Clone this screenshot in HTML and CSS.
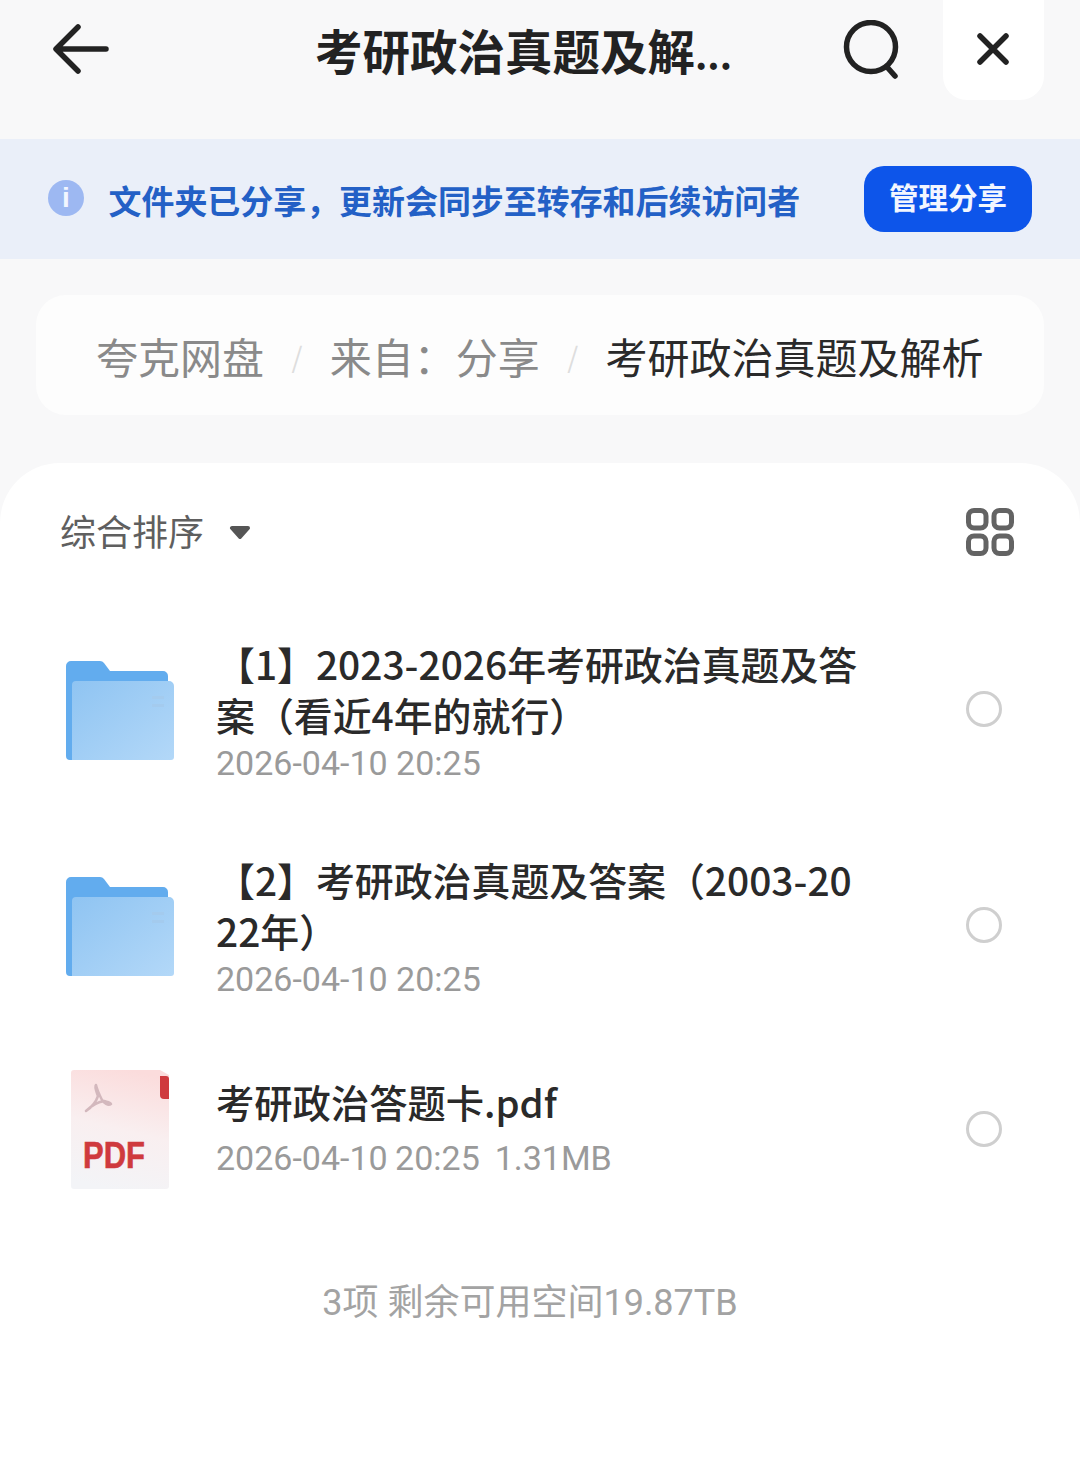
FILE: index.html
```html
<!DOCTYPE html>
<html lang="zh-CN">
<head>
<meta charset="utf-8">
<title>考研政治真题及解析</title>
<link rel="stylesheet" href="styles.css">
</head>
<body>
<header class="topbar">
  <svg class="back" width="56" height="52" viewBox="0 0 56 52"><path d="M25 4 L3 26 L25 48 M4 26 H53" fill="none" stroke="#222" stroke-width="5.5" stroke-linecap="round" stroke-linejoin="round"/></svg>
  <h1 class="title">考研政治真题及解<span class="dots">...</span></h1>
  <svg class="search" width="60" height="60" viewBox="0 0 60 60"><circle cx="28" cy="27" r="24.5" fill="none" stroke="#222" stroke-width="5.5"/><path d="M44 47 L52 56" stroke="#222" stroke-width="5.5" stroke-linecap="round"/></svg>
  <div class="close"><svg width="32" height="32" viewBox="0 0 32 32"><path d="M3 3 L29 29 M29 3 L3 29" stroke="#222" stroke-width="5.5" stroke-linecap="round"/></svg></div>
</header>
<section class="notice">
  <div class="info">i</div>
  <p class="notice-text">文件夹已分享，更新会同步至转存和后续访问者</p>
  <button class="manage">管理分享</button>
</section>
<nav class="crumbs">
  <span class="crumb">夸克网盘</span><span class="sep">/</span>
  <span class="crumb">来自：分享</span><span class="sep">/</span>
  <span class="crumb current">考研政治真题及解析</span>
</nav>
<main class="sheet">
  <div class="toolbar">
    <div class="sort"><span>综合排序</span><svg width="22" height="14" viewBox="0 0 22 14"><path d="M3 3 H19 L11 12 Z" fill="#555" stroke="#555" stroke-width="4" stroke-linejoin="round"/></svg></div>
    <svg width="48" height="48" viewBox="0 0 48 48" fill="none" stroke="#636363" stroke-width="5"><rect x="2.5" y="2.5" width="17.5" height="17.5" rx="5.5"/><rect x="28" y="2.5" width="17.5" height="17.5" rx="5.5"/><rect x="2.5" y="28" width="17.5" height="17.5" rx="5.5"/><rect x="28" y="28" width="17.5" height="17.5" rx="5.5"/></svg>
  </div>
  <ul class="files">
    <li class="file two-line">
      <svg class="icon" width="108" height="100" viewBox="0 0 108 100"><use href="#folder"/></svg>
      <div class="meta"><div class="name">【1】2023-2026年考研政治真题及答案（看近4年的就行）</div><div class="date">2026-04-10 20:25</div></div>
      <span class="radio"></span>
    </li>
    <li class="file two-line">
      <svg class="icon" width="108" height="100" viewBox="0 0 108 100"><use href="#folder"/></svg>
      <div class="meta"><div class="name">【2】考研政治真题及答案（2003-2022年）</div><div class="date">2026-04-10 20:25</div></div>
      <span class="radio"></span>
    </li>
    <li class="file one-line">
      <svg class="icon pdf" width="108" height="122" viewBox="0 0 108 122">
        <defs><linearGradient id="pg" x1="0.6" y1="0" x2="0.4" y2="1"><stop offset="0" stop-color="#fbdcdc"/><stop offset="0.5" stop-color="#f9eff0"/><stop offset="1" stop-color="#f3f4f7"/></linearGradient></defs>
        <path d="M5 4 a3 3 0 0 1 3-3 H94 L103 6 V117 a3 3 0 0 1-3 3 H8 a3 3 0 0 1-3-3 Z" fill="url(#pg)"/>
        <path d="M94 7 h6 a3 3 0 0 1 3 3 V30 h-5 a4 4 0 0 1-4-4 Z" fill="#cf3a3e"/>
        <path d="M30 16 C28 18 31 24 32 27 C30 33 26 38 20 42 C26 36 32 33 38 32 C41 33 44 33 45 35 C42 37 38 34 36 31 C34 27 31 21 30 16 Z" fill="none" stroke="#d3b8bd" stroke-width="2.5" stroke-linejoin="round"/>
      </svg>
      <span class="pdf-label">PDF</span>
      <div class="meta"><div class="name">考研政治答题卡.pdf</div><div class="date">2026-04-10 20:25&nbsp; 1.31MB</div></div>
      <span class="radio"></span>
    </li>
  </ul>
  <footer class="summary">3项 剩余可用空间19.87TB</footer>
</main>
<svg class="defs" width="0" height="0">
  <defs>
    <linearGradient id="fg" x1="0" y1="0" x2="1" y2="1"><stop offset="0" stop-color="#8fc4f2"/><stop offset="1" stop-color="#b3d8f8"/></linearGradient>
    <symbol id="folder" viewBox="0 0 108 100">
      <path d="M0 6 a5 5 0 0 1 5-5 H34 a5 5 0 0 1 4 2 L44 11 H97 a5 5 0 0 1 5 5 V100 H4 a4 4 0 0 1-4-4 Z" fill="#62acee"/>
      <path d="M6 25 a4 4 0 0 1 4-4 H103 a5 5 0 0 1 5 5 V97 a3 3 0 0 1-3 3 H6 Z" fill="url(#fg)"/>
      <rect x="86" y="36" width="12" height="3" fill="#a4cbee"/><rect x="86" y="44" width="12" height="3" fill="#a4cbee"/>
    </symbol>
  </defs>
</svg>
</body>
</html>
```
FILE: styles.css
```css
* { box-sizing: border-box; }
html, body { margin: 0; padding: 0; }
body { width: 1080px; height: 1469px; overflow: hidden; background: #f8f8f9; font-family: "Noto Sans CJK SC", "Noto Sans", sans-serif; position: relative; }
.defs { position: absolute; }
.topbar { height: 139px; display: flex; align-items: flex-start; padding-left: 53px; }
.back { margin-top: 23px; flex: none; }
.title { margin: 20px 0 0 206px; width: 528px; font-size: 47.5px; line-height: 60px; font-weight: 700; color: #222; white-space: nowrap; }
.dots { font-size: 38px; }
.search { margin: 20px 0 0 0; flex: none; }
.close { width: 101px; height: 100px; margin-left: 40px; background: #fff; border-radius: 0 0 24px 24px; display: flex; align-items: center; justify-content: center; flex: none; padding: 0 2px 3px 0; }
.notice { height: 120px; background: #eaeff9; display: flex; align-items: center; padding: 0 48px; }
.info { width: 36px; height: 36px; border-radius: 50%; background: #9db8f2; color: #f2f6ff; font: 700 28px/36px "Liberation Sans", sans-serif; text-align: center; flex: none; margin-top: -2px; }
.notice-text { margin: 2px 0 0 24.5px; font-size: 32.95px; line-height: 44px; font-weight: 700; color: #2360c6; white-space: nowrap; }
.manage { margin: 0 0 0 auto; width: 168px; height: 66px; border: 0; border-radius: 20px; background: #0d55ea; color: #f2f6ff; font-family: inherit; font-size: 29.5px; font-weight: 700; padding: 0 0 6px; flex: none; }
.crumbs { height: 120px; margin: 36px 36px 0; background: #fdfdfd; border-radius: 30px; display: flex; align-items: center; padding: 2px 0 0 60px; font-size: 42px; color: #8a8a8a; white-space: nowrap; }
.crumb { line-height: 56px; }
.crumb.current { color: #2a2a2a; }
.sep { color: #dedede; margin: 0 27.4px; font-size: 28px; }
.sheet { margin-top: 48px; height: 1006px; background: #fff; border-radius: 60px 60px 0 0; padding: 0 66px 0 0; }
.toolbar { height: 138px; display: flex; justify-content: space-between; align-items: center; padding-left: 60px; }
.sort { display: flex; align-items: center; gap: 25px; font-size: 36px; color: #5f5f5f; }
.sort span { margin-top: -4px; }
.files { list-style: none; margin: 0; padding: 0; }
.file { display: flex; align-items: center; padding-left: 66px; position: relative; }
.two-line { height: 216px; }
.two-line:first-child { margin-top: 1px; }
.one-line { height: 196px; }
.icon { flex: none; }
.pdf { margin-bottom: 4px; }
.pdf-label { position: absolute; left: 83px; top: 100px; font: 700 36px/44px "Liberation Sans", sans-serif; color: #cf3a3e; -webkit-text-stroke: 0.6px #cf3a3e; transform: scaleX(0.86); transform-origin: left; }
.meta { width: 648px; margin: 3px 0 0 42px; color: #2a2a2a; }
.name { font-size: 38.9px; line-height: 51px; word-break: break-all; font-weight: 500; }
.date { font: 34px/44px Roboto, sans-serif; color: #9a9a9a; margin-top: 1.5px; }
.one-line .meta { margin: 0 0 8px 42px; }
.one-line .name { font-size: 38.3px; line-height: 52px; }
.one-line .date { margin-top: 8px; word-spacing: -1px; }
.radio { position: absolute; left: 966px; top: 50%; width: 36px; height: 36px; border: 3px solid #cfcfcf; border-radius: 50%; }
.two-line .radio { margin-top: -19px; }
.one-line .radio { margin-top: -21px; }
.summary { margin: 50px 0 0 46px; text-align: center; font-size: 36px; line-height: 46px; color: #a3a3a3; font-family: Roboto, "Noto Sans CJK SC", sans-serif; }
```
